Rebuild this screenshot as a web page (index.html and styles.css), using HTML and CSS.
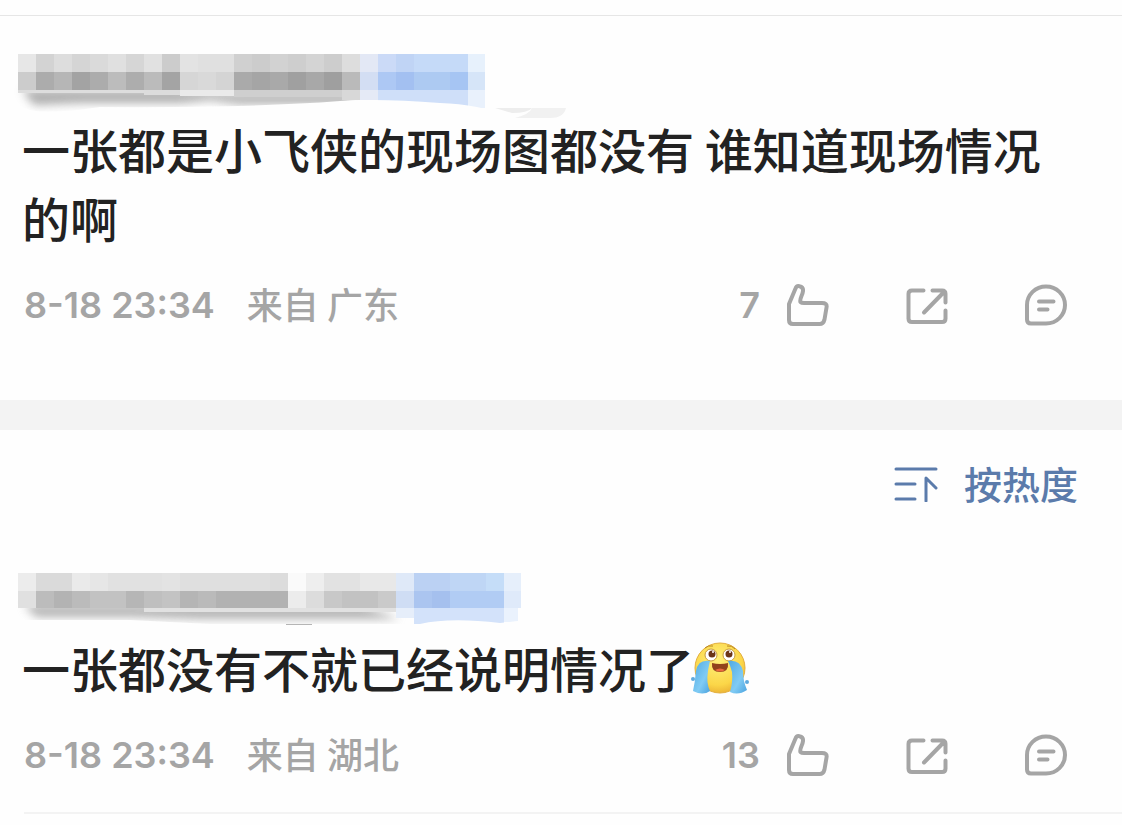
FILE: index.html
```
<!DOCTYPE html>
<html lang="zh-CN">
<head>
    <meta charset="UTF-8">
    <meta name="viewport" content="width=device-width, initial-scale=1.0">
    <title>评论</title>
    <link rel="stylesheet" href="styles.css">
</head>
<body>
    <svg class="sprite" aria-hidden="true">
        <symbol id="icon-like" viewBox="0 0 42 42">
            <path d="M2 20 L8.500 4.500 Q9.500 1.500 12.500 2.200 Q16.500 3 16 7 Q15.800 9 14.500 12 Q12.500 17 13.500 18 Q14.500 19 17 19 H35 Q40.200 19 39.600 23 L37.500 35.500 Q36.500 40 32.500 40 H6 Q2 40 2 36 Z"/>
        </symbol>
        <symbol id="icon-share" viewBox="0 0 42 42">
            <path d="M17.500 6.500 H6 Q2.500 6.500 2.500 10 V34.500 Q2.500 38 6 38 H36 Q39.500 38 39.500 34.500 V26.500 M26.500 6.500 H36 Q39.500 6.500 39.500 10 V18.500 M38 8 L18 28.500"/>
        </symbol>
        <symbol id="icon-comment" viewBox="0 0 42 42">
            <path d="M2 21 A19 18.500 0 1 1 21 39.500 H6 Q2 39.500 2 35.500 Z M14 17.500 H28.500 M14 25.500 H22.500"/>
        </symbol>
    </svg>

    <main class="comments">
        <article class="comment comment-main">
            <svg class="author" viewBox="0 0 600 66" role="img" aria-label="用户">
                <defs>
                    <filter id="soft" x="-10%" y="-50%" width="120%" height="200%"><feGaussianBlur stdDeviation="5"/></filter>
                    <clipPath id="edge1"><path d="M8 0 H600 V70 H512 Q480 56 440 55 Q380 50 340 53 Q250 60 100 59 Q60 65 36 63 Q12 60 8 40 Z"/></clipPath>
                </defs>
                <g clip-path="url(#edge1)">
                    <path d="M22 42 H170 L240 46 H350 V56 H240 L210 52 L180 55 H80 L34 57 Z" fill="#8c8c8c" opacity=".7" filter="url(#soft)"/>
                    <path d="M495 60 H532 Q528 65 512 65 Z" fill="#ededed"/>
                    <path d="M532 60 H566 Q564 70 550 70 H515 Q530 66 532 60 Z" fill="#f1f1f1"/>
                    <g shape-rendering="crispEdges">
                        <path fill="#e7e7e7" d="M18 6h18v18h-18z"/><path fill="#d3d3d3" d="M36 6h18v18h-18z"/><path fill="#dddddd" d="M54 6h18v18h-18z"/><path fill="#d5d5d5" d="M72 6h18v18h-18z"/><path fill="#dadada" d="M90 6h18v18h-18z"/><path fill="#e0e0e0" d="M108 6h18v18h-18z"/><path fill="#d6d6d6" d="M126 6h18v18h-18z"/><path fill="#e1e1e1" d="M144 6h18v18h-18z"/><path fill="#cccccc" d="M162 6h18v18h-18z"/><path fill="#e3e3e3" d="M180 6h18v18h-18z"/><path fill="#e0e0e0" d="M198 6h36v18h-36z"/><path fill="#d0d0d0" d="M234 6h18v18h-18z"/><path fill="#cccccc" d="M252 6h18v18h-18z"/><path fill="#d2d2d2" d="M270 6h18v18h-18z"/><path fill="#cecece" d="M288 6h18v18h-18z"/><path fill="#d4d4d4" d="M306 6h18v18h-18z"/><path fill="#cdcdcd" d="M324 6h18v18h-18z"/><path fill="#dddddd" d="M342 6h18v18h-18z"/><path fill="#e3e8f5" d="M360 6h18v18h-18z"/><path fill="#cbdaf7" d="M378 6h18v18h-18z"/><path fill="#c0d4f5" d="M396 6h18v18h-18z"/><path fill="#c5daf8" d="M414 6h54v18h-54z"/><path fill="#e7f1fc" d="M468 6h17v18h-17z"/>
                    </g>
                    <g shape-rendering="crispEdges">
                        <path fill="#cccccc" d="M18 24h18v18h-18z"/><path fill="#acacac" d="M36 24h18v18h-18z"/><path fill="#b6b6b6" d="M54 24h18v18h-18z"/><path fill="#a3a3a3" d="M72 24h18v18h-18z"/><path fill="#acacac" d="M90 24h18v18h-18z"/><path fill="#bcbcbc" d="M108 24h18v18h-18z"/><path fill="#adadad" d="M126 24h18v18h-18z"/><path fill="#bbbbbb" d="M144 24h18v18h-18z"/><path fill="#a4a4a4" d="M162 24h18v18h-18z"/><path fill="#d6d6d6" d="M180 24h18v18h-18z"/><path fill="#d9d9d9" d="M198 24h18v18h-18z"/><path fill="#d4d4d4" d="M216 24h18v18h-18z"/><path fill="#aaaaaa" d="M234 24h18v18h-18z"/><path fill="#a5a5a5" d="M252 24h18v18h-18z"/><path fill="#a9a9a9" d="M270 24h18v18h-18z"/><path fill="#a0a0a0" d="M288 24h18v18h-18z"/><path fill="#a8a8a8" d="M306 24h18v18h-18z"/><path fill="#9f9f9f" d="M324 24h18v18h-18z"/><path fill="#bababa" d="M342 24h18v18h-18z"/><path fill="#d3def3" d="M360 24h18v18h-18z"/><path fill="#adc8f4" d="M378 24h18v18h-18z"/><path fill="#a3c0f1" d="M396 24h18v18h-18z"/><path fill="#adcaf2" d="M414 24h36v18h-36z"/><path fill="#a6c5f3" d="M450 24h18v18h-18z"/><path fill="#d6e5f8" d="M468 24h17v18h-17z"/>
                    </g>
                    <path fill="#dddddd" d="M18 42h126v3h-126z"/>
                    <path fill="#dcdcdc" d="M144 42h36v5h-36z"/>
                    <path fill="#eaeaea" d="M180 42h54v6h-54z"/>
                    <path fill="#cfcfcf" d="M234 42h108v7h-108z"/>
                    <path fill="#d8d8d8" d="M342 42h18v10h-18z"/>
                    <path fill="#e5eaf6" d="M360 42h18v10h-18z"/>
                    <path fill="#cfdff9" d="M378 42h90v17h-90z"/>
                    <path fill="#e9f1fc" d="M468 42h17v18h-17z"/>
                </g>
            </svg>
            <p class="text">一张都是小飞侠的现场图都没有 谁知道现场情况的啊</p>
            <footer class="meta">
                <time>8-18 23:34</time>
                <span class="place">来自 广东</span>
                <div class="actions">
                    <button type="button" class="like" aria-label="赞 7"><span>7</span><svg class="icon"><use href="#icon-like"/></svg></button>
                    <button type="button" aria-label="转发"><svg class="icon"><use href="#icon-share"/></svg></button>
                    <button type="button" aria-label="评论"><svg class="icon"><use href="#icon-comment"/></svg></button>
                </div>
            </footer>
        </article>

        <div class="sort-bar">
            <button type="button" class="sort">
                <svg class="sort-icon" viewBox="0 0 44 36" aria-hidden="true"><path d="M2 3 H42 M2 18 H21 M2 33 H21 M32 35 V12 L42 22"/></svg>
                <span>按热度</span>
            </button>
        </div>

        <article class="comment">
            <svg class="author" viewBox="0 0 600 66" role="img" aria-label="用户">
                <defs>
                    <clipPath id="edge2"><path d="M8 0 H600 V44 Q520 54 500 56 Q450 50 420 57 H210 L130 53 H24 Q10 50 8 36 Z"/></clipPath>
                </defs>
                <g clip-path="url(#edge2)">
                    <path d="M24 38 H360 L400 52 H200 L130 50 H36 Z" fill="#8c8c8c" opacity=".65" filter="url(#soft)"/>
                    <g shape-rendering="crispEdges">
                        <path fill="#ececec" d="M18 6h18v18h-18z"/><path fill="#dadada" d="M36 6h36v18h-36z"/><path fill="#eaeaea" d="M72 6h18v18h-18z"/><path fill="#e6e6e6" d="M90 6h18v18h-18z"/><path fill="#e1e1e1" d="M108 6h54v18h-54z"/><path fill="#e3e3e3" d="M162 6h18v18h-18z"/><path fill="#dfdfdf" d="M180 6h90v18h-90z"/><path fill="#dcdcdc" d="M270 6h18v18h-18z"/><path fill="#fafafa" d="M288 6h18v18h-18z"/><path fill="#eeeeee" d="M306 6h18v18h-18z"/><path fill="#e2e2e2" d="M324 6h36v18h-36z"/><path fill="#e8e8e8" d="M360 6h36v18h-36z"/><path fill="#dfe9f8" d="M396 6h18v18h-18z"/><path fill="#bbd1f3" d="M414 6h36v18h-36z"/><path fill="#bfd6f5" d="M450 6h36v18h-36z"/><path fill="#c5ddf8" d="M486 6h18v18h-18z"/><path fill="#e6effb" d="M504 6h17v18h-17z"/>
                    </g>
                    <g shape-rendering="crispEdges">
                        <path fill="#e0e0e0" d="M18 24h18v17h-18z"/><path fill="#bcbcbc" d="M36 24h18v17h-18z"/><path fill="#b3b3b3" d="M54 24h18v17h-18z"/><path fill="#bbbbbb" d="M72 24h18v17h-18z"/><path fill="#c2c2c2" d="M90 24h36v17h-36z"/><path fill="#b6b6b6" d="M126 24h18v17h-18z"/><path fill="#bfbfbf" d="M144 24h18v17h-18z"/><path fill="#c3c3c3" d="M162 24h18v17h-18z"/><path fill="#b5b5b5" d="M180 24h18v17h-18z"/><path fill="#bababa" d="M198 24h18v17h-18z"/><path fill="#b2b2b2" d="M216 24h72v17h-72z"/><path fill="#ececec" d="M288 24h18v17h-18z"/><path fill="#dcdcdc" d="M306 24h18v17h-18z"/><path fill="#c8c8c8" d="M324 24h18v17h-18z"/><path fill="#c2c2c2" d="M342 24h36v17h-36z"/><path fill="#cacaca" d="M378 24h18v17h-18z"/><path fill="#cfddf4" d="M396 24h18v17h-18z"/><path fill="#abc5f0" d="M414 24h18v17h-18z"/><path fill="#a5c0ee" d="M432 24h18v17h-18z"/><path fill="#b1ccf4" d="M450 24h54v17h-54z"/><path fill="#dfeafa" d="M504 24h17v17h-17z"/>
                    </g>
                    <path fill="#e1e1e1" d="M144 41h252v4h-252z"/>
                    <path fill="#e6eefa" d="M396 41h18v10h-18z"/>
                    <path fill="#d3e2fa" d="M414 41h90v16h-90z"/>
                    <path fill="#eaf2fd" d="M504 41h14v14h-14z"/>
                </g>
                <path fill="#b5b5b5" d="M286 57h26v1h-26z"/>
            </svg>
            <p class="text">一张都没有不就已经说明情况了<svg class="emoji" viewBox="0 0 60 54" role="img" aria-label="泪">
                <defs>
                    <radialGradient id="face" cx="45%" cy="35%" r="70%"><stop offset="0" stop-color="#fff07a"/><stop offset=".7" stop-color="#fbd648"/><stop offset="1" stop-color="#e9ad32"/></radialGradient>
                    <linearGradient id="tear" x1="0" y1="0" x2="1" y2="1"><stop offset="0" stop-color="#4fa9e2"/><stop offset=".6" stop-color="#80cbf4"/><stop offset="1" stop-color="#4ba3df"/></linearGradient>
                </defs>
                <ellipse cx="30" cy="26" rx="25" ry="25" fill="url(#face)" stroke="#e3ae3d"/>
                <path d="M15 6 Q18 3 23 4 M37 4 Q42 3 45 7" fill="none" stroke="#b88522"/>
                <circle cx="21" cy="13" r="6" fill="#fff" stroke="#c89a3c"/>
                <circle cx="39" cy="13" r="6" fill="#fff" stroke="#c89a3c"/>
                <circle cx="22" cy="12" r="3.500" fill="#6b3418"/><circle cx="39" cy="12" r="3.500" fill="#6b3418"/>
                <circle cx="23" cy="10" r="1" fill="#fff"/><circle cx="40" cy="10" r="1" fill="#fff"/>
                <path d="M22 21 Q30 23 38 21 Q39 30 30 30 Q21 30 22 21 Z" fill="#91421b"/>
                <path d="M25 28 Q30 25 35 28 Q30 31 25 28 Z" fill="#e9683e"/>
                <path d="M20 19 Q8 17 6 29 Q5 40 3 49 Q13 54 20 49 Q16 41 18 29 Q19 23 20 19 Z" fill="url(#tear)"/>
                <path d="M38 19 Q50 17 53 29 Q53 39 57 48 Q48 54 40 50 Q43 40 42 30 Q40 23 38 19 Z" fill="url(#tear)"/>
                <circle cx="3" cy="37" r="2" fill="#5fa9dd"/><circle cx="57" cy="40" r="2" fill="#5fa9dd"/>
            </svg></p>
            <footer class="meta">
                <time>8-18 23:34</time>
                <span class="place">来自 湖北</span>
                <div class="actions">
                    <button type="button" class="like" aria-label="赞 13"><span>13</span><svg class="icon"><use href="#icon-like"/></svg></button>
                    <button type="button" aria-label="转发"><svg class="icon"><use href="#icon-share"/></svg></button>
                    <button type="button" aria-label="评论"><svg class="icon"><use href="#icon-comment"/></svg></button>
                </div>
            </footer>
        </article>
        <hr class="divider">
    </main>
</body>
</html>
```

FILE: styles.css
```
* {
    box-sizing: border-box;
}
body {
    margin: 0;
    background-color: #fefefe;
    color: #222;
    font-family: Inter, "Noto Sans CJK SC", sans-serif;
}
button {
    display: flex;
    align-items: center;
    padding: 0;
    border: none;
    background: none;
    color: inherit;
    font: inherit;
    cursor: pointer;
}
.sprite {
    display: none;
}
.comments {
    padding-top: 15px;
}
.comment-main {
    border-top: 1px solid #e6e6e6;
    padding-top: 32px;
    padding-bottom: 70px;
}
.author {
    display: block;
    width: 600px;
    max-width: 100%;
    overflow: visible;
}
.text {
    margin: 0;
    padding: 0 54px 0 22px;
    font-family: "Noto Sans CJK SC", sans-serif;
    font-size: 48px;
    font-weight: 500;
    line-height: 69px;
}
.emoji {
    width: 60px;
    height: 54px;
    margin: -6px 0 0 -4px;
    vertical-align: -8px;
}
.meta {
    display: flex;
    align-items: center;
    height: 50px;
    margin-top: 28px;
    padding: 0 55px 0 24px;
    color: #a5a5a5;
    font-size: 36px;
    font-weight: 600;
    line-height: 50px;
}
.place {
    margin-left: 32px;
    padding-bottom: 4px;
    font-family: "Noto Sans CJK SC", sans-serif;
    font-weight: 500;
}
.actions {
    display: flex;
    gap: 77px;
    margin-left: auto;
}
.like {
    gap: 27px;
}
.icon {
    display: block;
    width: 42px;
    height: 42px;
    fill: none;
    stroke: currentColor;
    stroke-width: 4;
    stroke-linecap: round;
    stroke-linejoin: round;
}

/* sort */
.sort-bar {
    display: flex;
    justify-content: flex-end;
    border-top: 30px solid #f3f3f3;
    padding: 24px 44px 53px 24px;
}
.sort {
    gap: 26px;
    height: 60px;
    color: #5b7bab;
    font-family: "Noto Sans CJK SC", sans-serif;
    font-size: 38px;
    font-weight: 500;
}
.sort span {
    padding-bottom: 4px;
}
.sort-icon {
    width: 44px;
    height: 36px;
    fill: none;
    stroke: currentColor;
    stroke-width: 3;
    stroke-linecap: round;
    stroke-linejoin: round;
}
.divider {
    margin: 32px 0 0 24px;
    border: none;
    border-top: 2px solid #f3f3f3;
}
```
